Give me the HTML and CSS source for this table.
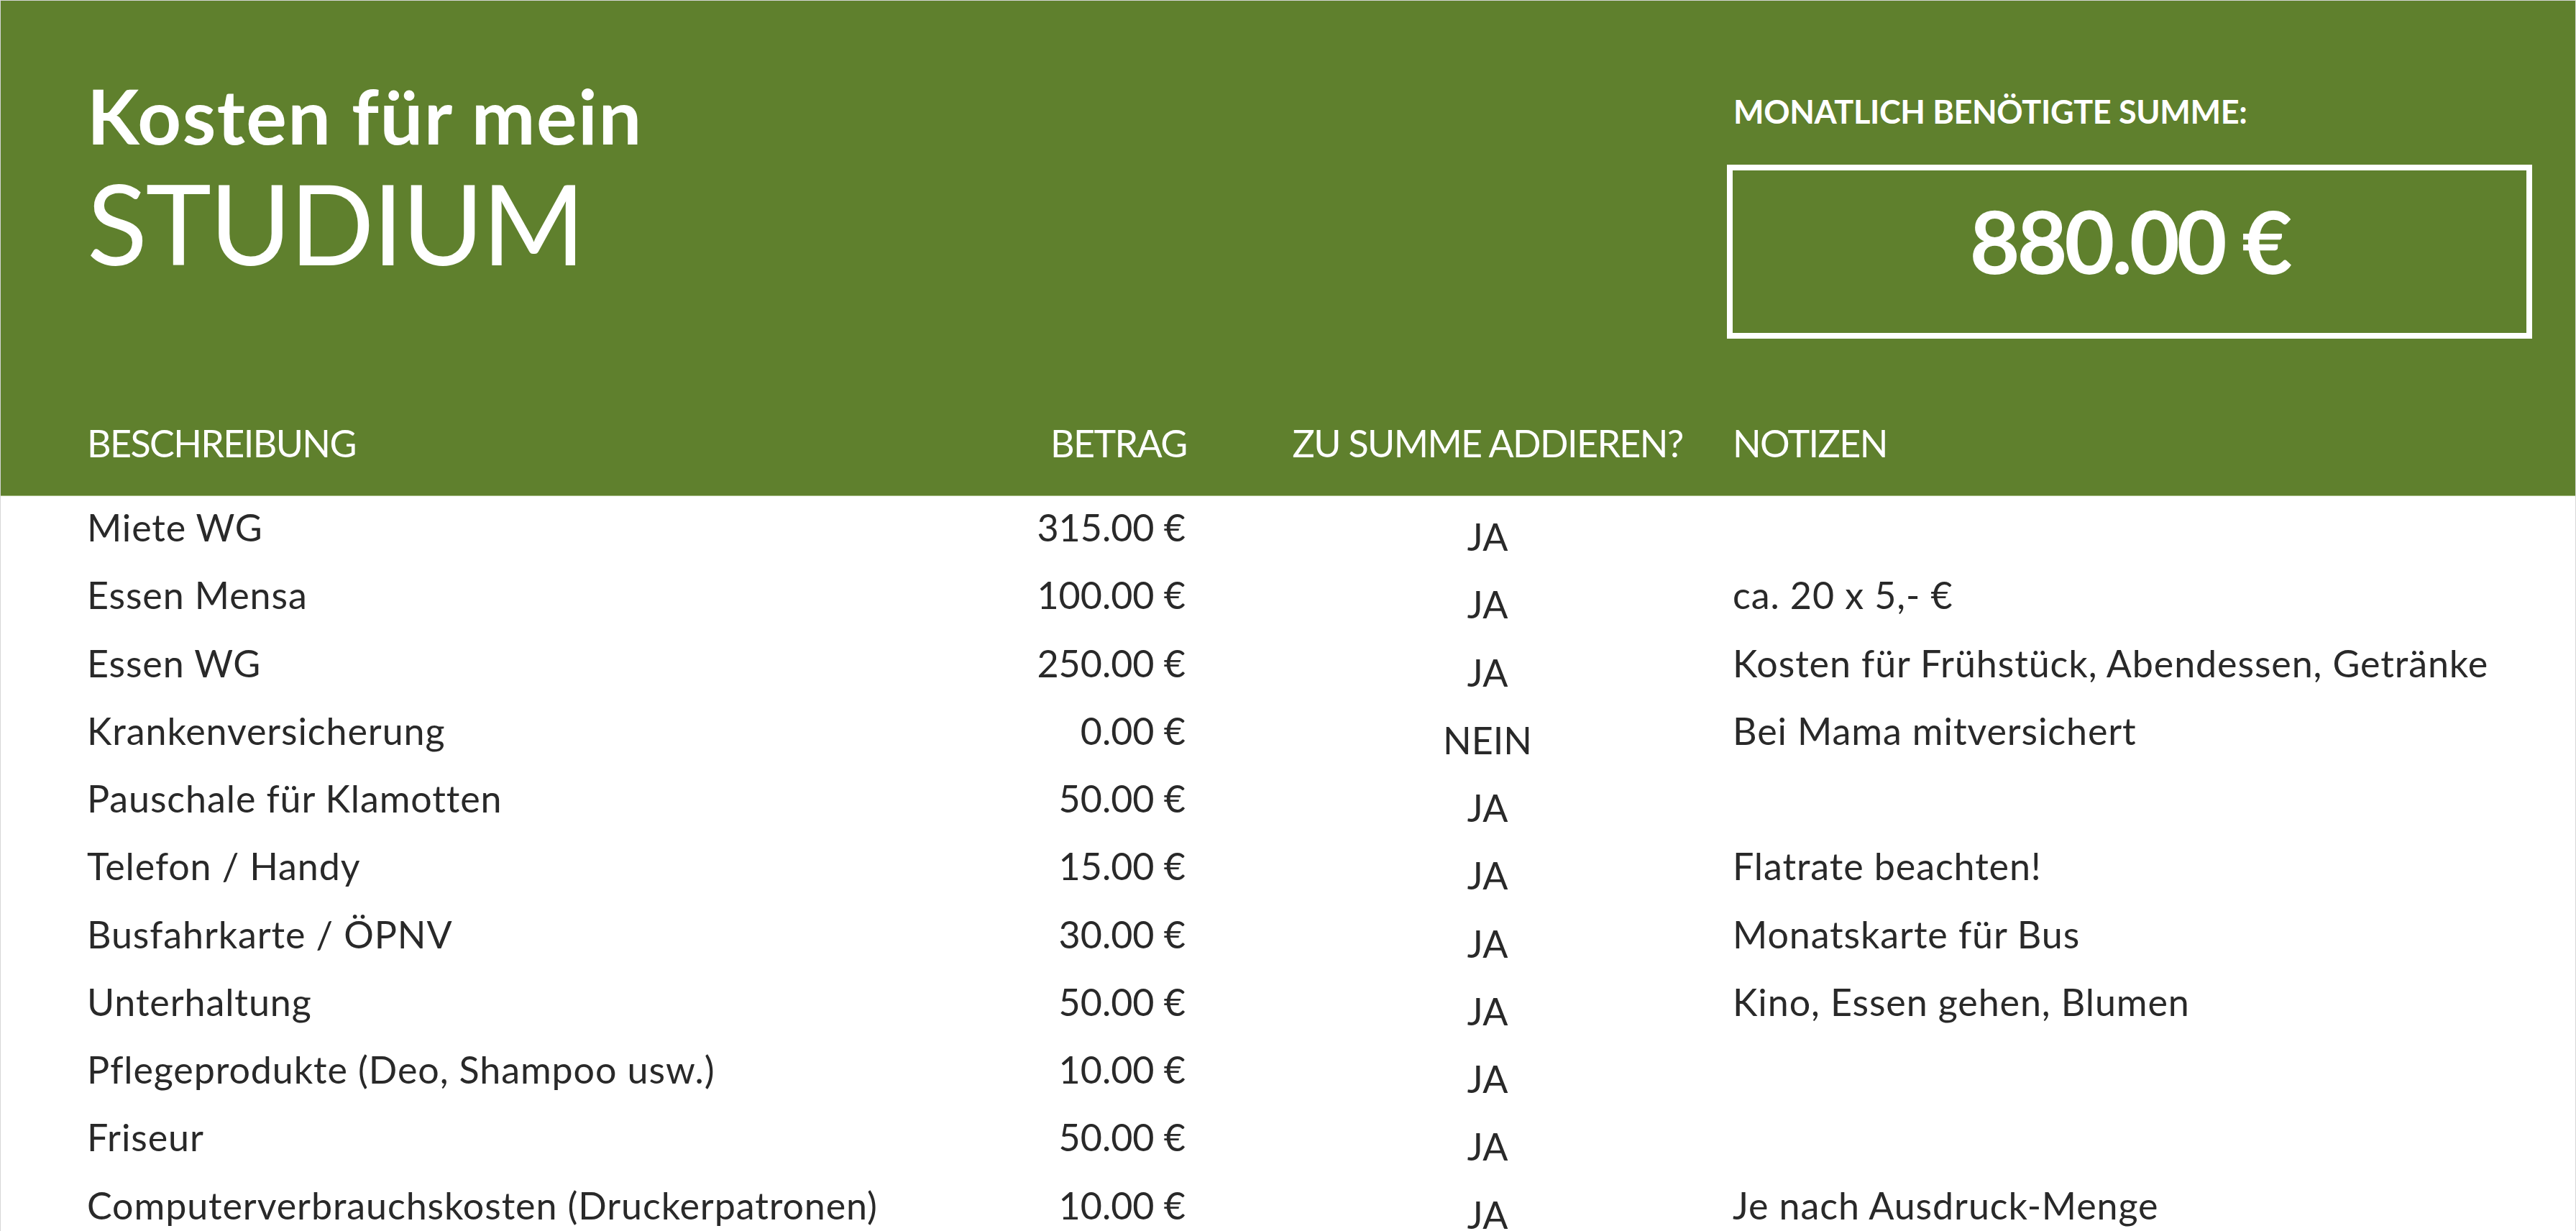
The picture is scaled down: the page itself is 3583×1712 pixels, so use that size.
FILE: index.html
```html
<!DOCTYPE html>
<html lang="de">
<head>
<meta charset="utf-8">
<title>Kosten für mein Studium</title>
<link rel="stylesheet" href="styles.css">
</head>
<body>
<div class="sheet">
  <header class="band">
    <div class="top">
      <div class="titles">
        <div class="title-small">Kosten für mein</div>
        <div class="title-big">STUDIUM</div>
      </div>
      <div class="summary">
        <div class="summary-label">MONATLICH BENÖTIGTE SUMME:</div>
        <div class="summary-box"><span class="summary-value">880.00 €</span></div>
      </div>
    </div>
    <div class="row thead">
      <div class="c-desc">BESCHREIBUNG</div>
      <div class="c-amount">BETRAG</div>
      <div class="c-add">ZU SUMME ADDIEREN?</div>
      <div class="c-note">NOTIZEN</div>
    </div>
  </header>
  <main class="tbody">
    <div class="row"><div class="c-desc">Miete WG</div><div class="c-amount">315.00 €</div><div class="c-add">JA</div><div class="c-note"></div></div>
    <div class="row"><div class="c-desc">Essen Mensa</div><div class="c-amount">100.00 €</div><div class="c-add">JA</div><div class="c-note">ca. 20 x 5,- €</div></div>
    <div class="row"><div class="c-desc">Essen WG</div><div class="c-amount">250.00 €</div><div class="c-add">JA</div><div class="c-note">Kosten für Frühstück, Abendessen, Getränke</div></div>
    <div class="row"><div class="c-desc">Krankenversicherung</div><div class="c-amount">0.00 €</div><div class="c-add">NEIN</div><div class="c-note">Bei Mama mitversichert</div></div>
    <div class="row"><div class="c-desc">Pauschale für Klamotten</div><div class="c-amount">50.00 €</div><div class="c-add">JA</div><div class="c-note"></div></div>
    <div class="row"><div class="c-desc">Telefon / Handy</div><div class="c-amount">15.00 €</div><div class="c-add">JA</div><div class="c-note">Flatrate beachten!</div></div>
    <div class="row"><div class="c-desc">Busfahrkarte / ÖPNV</div><div class="c-amount">30.00 €</div><div class="c-add">JA</div><div class="c-note">Monatskarte für Bus</div></div>
    <div class="row"><div class="c-desc">Unterhaltung</div><div class="c-amount">50.00 €</div><div class="c-add">JA</div><div class="c-note">Kino, Essen gehen, Blumen</div></div>
    <div class="row"><div class="c-desc">Pflegeprodukte (Deo, Shampoo usw.)</div><div class="c-amount">10.00 €</div><div class="c-add">JA</div><div class="c-note"></div></div>
    <div class="row"><div class="c-desc">Friseur</div><div class="c-amount">50.00 €</div><div class="c-add">JA</div><div class="c-note"></div></div>
    <div class="row"><div class="c-desc">Computerverbrauchskosten (Druckerpatronen)</div><div class="c-amount">10.00 €</div><div class="c-add">JA</div><div class="c-note">Je nach Ausdruck-Menge</div></div>
  </main>
</div>
</body>
</html>
```

FILE: styles.css
```css
html, body {
  margin: 0;
  padding: 0;
  height: 1712px;
  overflow: hidden;
  background: #ffffff;
}

.sheet {
  box-sizing: border-box;
  height: 1712px;
  overflow: hidden;
  border: 1px solid #d6d6d6;
  border-bottom: none;
  font-family: Lato, "Liberation Sans", sans-serif;
  color: #292929;
}

.band {
  background: #5f802d;
  color: #ffffff;
  border-bottom: 1px solid #a8bf86;
}

.top {
  display: flex;
  height: 583px;
  padding: 0 60px 0 120px;
}

.titles {
  flex: 1;
  padding-top: 105.6px;
}

.title-small {
  font-size: 106px;
  line-height: 106px;
  font-weight: 700;
  letter-spacing: 1.5px;
  white-space: nowrap;
}

.title-big {
  margin-top: 19.4px;
  font-size: 155px;
  line-height: 155px;
  font-weight: 400;
  letter-spacing: -2.6px;
  white-space: nowrap;
}

.summary {
  width: 1120px;
  padding-top: 126.6px;
}

.summary-label {
  padding-left: 9px;
  font-size: 45px;
  line-height: 54px;
  font-weight: 700;
  letter-spacing: -0.35px;
  white-space: nowrap;
}

.summary-box {
  box-sizing: border-box;
  margin-top: 47.4px;
  height: 242px;
  border: 8px solid #ffffff;
  padding-top: 24.6px;
  text-align: center;
}

.summary-value {
  font-size: 121px;
  line-height: 145.2px;
  font-weight: 700;
  letter-spacing: -4.3px;
  white-space: nowrap;
}

.row {
  display: grid;
  grid-template-columns: 979px 549px 761px 1fr;
  padding-left: 120px;
  font-size: 52px;
  line-height: 62.4px;
  white-space: nowrap;
}

.thead {
  box-sizing: border-box;
  height: 105px;
  padding-top: 0.7px;
  font-weight: 400;
  letter-spacing: -1.6px;
}

.tbody .row {
  height: 94.25px;
  box-sizing: border-box;
  padding-top: 12px;
}

.c-amount {
  text-align: right;
}

.thead .c-amount {
  margin-right: -1.6px;
}

.c-add {
  text-align: center;
  padding-left: 79px;
}

.tbody .c-add {
  padding-top: 13px;
}

.tbody .c-desc,
.tbody .c-note {
  letter-spacing: 0.9px;
}
```
